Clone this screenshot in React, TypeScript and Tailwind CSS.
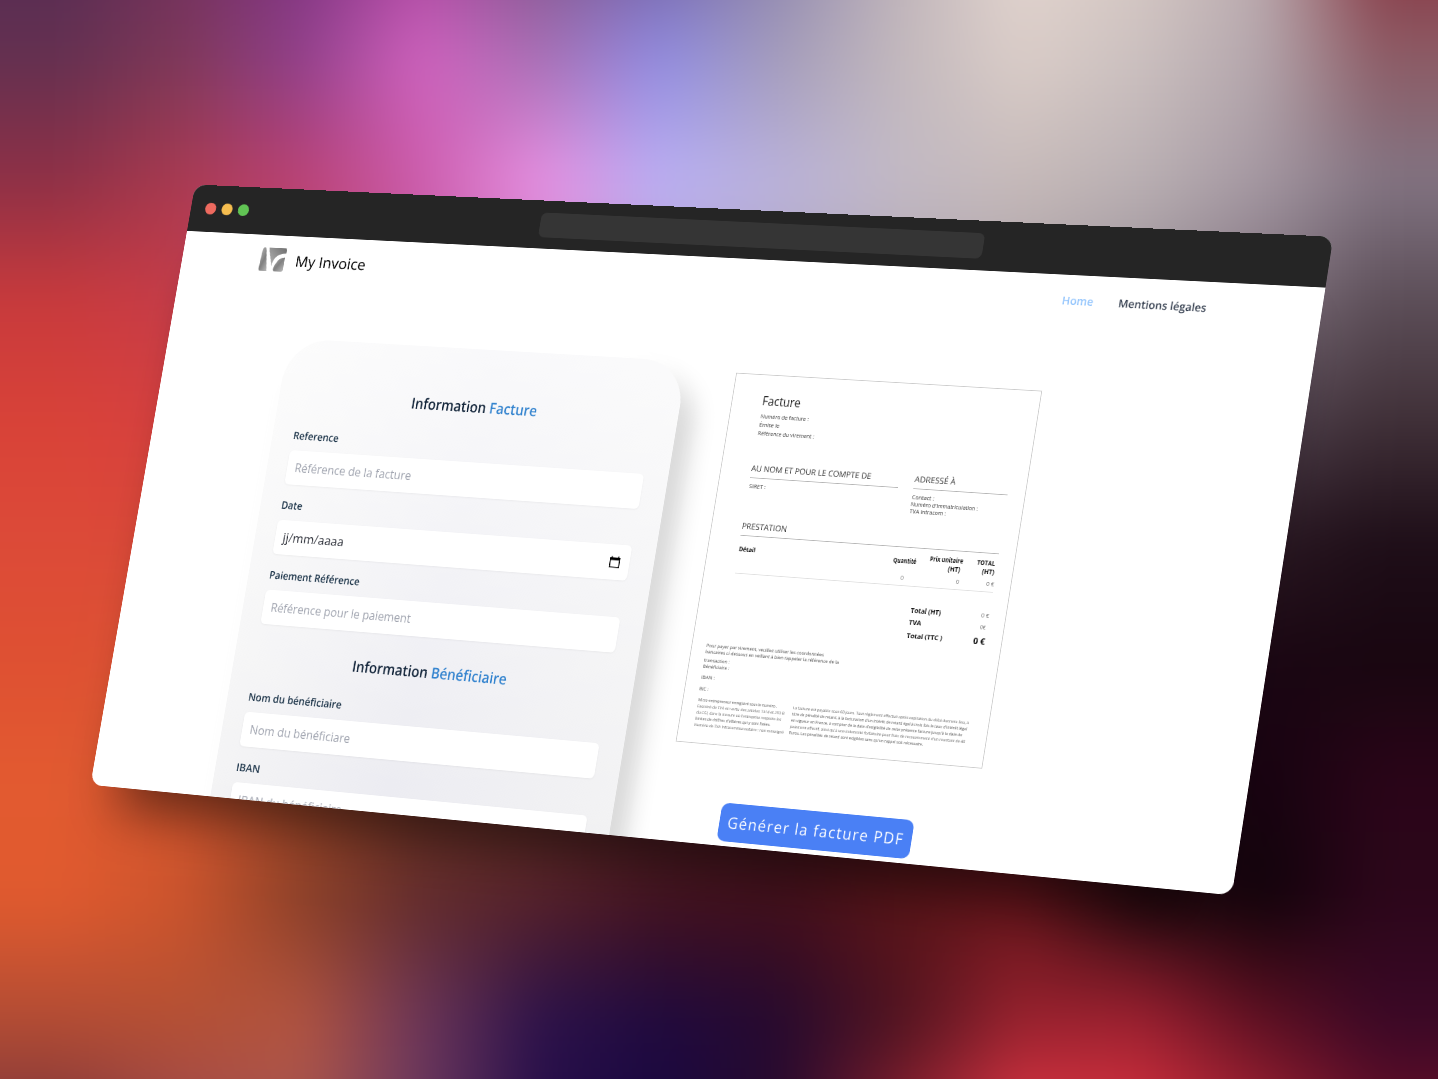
import { useLayoutEffect, useRef, useState, type ReactNode } from 'react';
import clsx from 'clsx';

const WIDTH = 1536;
const HEIGHT = 820;

/* Screen corners of the tilted window: top-left, top-right, bottom-right, bottom-left */
const CORNERS = [
  [195.1, 184.5],
  [1333.5, 236.8],
  [1232, 895.4],
  [90.4, 784.8],
];

function perspectiveMatrix(w: number, h: number, p: number[][]) {
  const [[x0, y0], [x1, y1], [x2, y2], [x3, y3]] = p;
  const dx1 = x1 - x2, dx2 = x3 - x2, sx = x0 - x1 + x2 - x3;
  const dy1 = y1 - y2, dy2 = y3 - y2, sy = y0 - y1 + y2 - y3;
  const det = dx1 * dy2 - dx2 * dy1;
  const g = (sx * dy2 - dx2 * sy) / det;
  const k = (dx1 * sy - sx * dy1) / det;
  const a = x1 - x0 + g * x1, b = x3 - x0 + k * x3;
  const d = y1 - y0 + g * y1, e = y3 - y0 + k * y3;
  return `matrix3d(${[a / w, d / w, 0, g / w, b / h, e / h, 0, k / h, 0, 0, 1, 0, x0, y0, 0, 1].join(',')})`;
}

/* Single line of text set to an exact width */
function T({ w, className, children }: { w: number; className?: string; children: ReactNode }) {
  const ref = useRef<HTMLSpanElement>(null);
  const [scale, setScale] = useState(1);
  useLayoutEffect(() => {
    if (ref.current && ref.current.offsetWidth) setScale(w / parseFloat(getComputedStyle(ref.current).width));
  }, [w]);
  return (
    <span className={clsx('block whitespace-nowrap', className)} style={{ width: w }}>
      <span ref={ref} className="inline-block origin-left align-top" style={{ transform: `scaleX(${scale})` }}>
        {children}
      </span>
    </span>
  );
}

/* Backdrop colours on a 120px lattice, blended between the lattice points */
const MESH = [
  ['#542c54', '#702f5c', '#7c3280', '#a8449c', '#7e5288', '#6e5ea0', '#8c84ac', '#beb2b8', '#e4d6d0', '#d8cac5', '#bcacb0', '#8a3440'],
  ['#643050', '#7e3858', '#90408a', '#d062be', '#a870b4', '#908ce2', '#a49cba', '#c2b8bc', '#dacdc8', '#cbc0bf', '#b4a6ac', '#8c5c66'],
  ['#8e3046', '#a83a50', '#ba4274', '#cc5cac', '#e890e2', '#bab0f4', '#bab2da', '#c2b9c4', '#c6bab9', '#bab0b3', '#a598a2', '#827482'],
  ['#c83a3c', '#c83c48', '#b8446a', '#c05aa4', '#c880c4', '#b0a0d4', '#aea6c0', '#b0a6b0', '#aaa0a6', '#9a9098', '#80727e', '#5c4e58'],
  ['#d84238', '#d84040', '#c04450', '#a04860', '#905870', '#806880', '#807080', '#807078', '#746872', '#645864', '#50424e', '#403038'],
  ['#dc4a38', '#dc4838', '#c44440', '#944040', '#703c4c', '#604050', '#584050', '#503c48', '#44303c', '#382430', '#2a1822', '#1e0e18'],
  ['#de5032', '#e05434', '#c04a34', '#883430', '#602c34', '#502430', '#48202c', '#401c28', '#341420', '#260c18', '#1a0612', '#180610'],
  ['#e25a30', '#d8562e', '#a04628', '#723424', '#643024', '#582424', '#4c1a20', '#441418', '#3c0e16', '#20060e', '#160310', '#2a0518'],
  ['#e05a2e', '#cc542c', '#8c4028', '#622c2c', '#54202a', '#42121f', '#420e1a', '#5a1418', '#68141a', '#24080e', '#10030a', '#2c061a'],
  ['#b24c34', '#b45034', '#b25440', '#6c3658', '#2c124a', '#200a3e', '#260a2e', '#501420', '#98222e', '#9c2030', '#5e1022', '#3a0826'],
  ['#7a343c', '#9c4850', '#a85652', '#6a3862', '#240c4a', '#160640', '#28092e', '#922232', '#ea3a48', '#e43642', '#b02636', '#6c1028'],
];

const STEPS = 8;

function rgb(hex: string) {
  return [1, 3, 5].map((i) => parseInt(hex.slice(i, i + 2), 16));
}

function Backdrop() {
  const strips: string[] = [];
  for (let r = 0; r < MESH.length - 1; r++) {
    for (let s = 0; s < STEPS; s++) {
      const t = s / STEPS;
      const stops = MESH[r].map((color, i) => {
        const from = rgb(color);
        const to = rgb(MESH[r + 1][i]);
        const mixed = from.map((v, n) => Math.round(v + (to[n] - v) * t));
        return `rgb(${mixed.join(',')}) ${120 + i * 120}px`;
      });
      strips.push(`linear-gradient(90deg, ${stops.join(',')})`);
    }
  }
  return (
    <div className="absolute -top-[68px] -left-[60px] flex w-[1560px] flex-col blur-[24px]">
      {strips.map((background, i) => (
        <div key={i} className="h-[15px] shrink-0" style={{ background }} />
      ))}
    </div>
  );
}

function Logo() {
  return (
    <svg viewBox="0 0 40 34" className="h-[34px] w-10">
      <defs>
        <linearGradient id="logoGray" x1="0" y1="0" x2="1" y2="1">
          <stop offset="0" stopColor="#b0b0b0" />
          <stop offset="0.5" stopColor="#808080" />
          <stop offset="1" stopColor="#bababa" />
        </linearGradient>
        <linearGradient id="logoTop" x1="0" y1="1" x2="1" y2="0">
          <stop offset="0" stopColor="#b8b8b8" />
          <stop offset="1" stopColor="#6e6e6e" />
        </linearGradient>
      </defs>
      <path d="M3 4 Q3.500 0 6 0 Q8 0 8.500 3 L13.500 32 H4 Q1.500 32 1.500 29 Z" fill="url(#logoGray)" />
      <path d="M13 -1 H34 Q38 -1 38 3 V7 Q27 8 23.500 13 Q20 17 19.500 25 L13 4 Q12 -1 13 -1 Z" fill="url(#logoTop)" />
      <path d="M37 12.500 V28.500 Q37 32 33.500 32 H25 Q22.500 32 22.500 29 Q22.500 24 26 20 Q28 13.500 37 12.500 Z" fill="url(#logoGray)" />
    </svg>
  );
}

function CalendarIcon() {
  return (
    <svg viewBox="0 0 16 16" className="size-4">
      <path d="M3.500 0.500v2M12.500 0.500v2" stroke="#000" strokeWidth="1.600" />
      <path d="M1.700 3h12.600v11.600h-12.600z" fill="none" stroke="#000" strokeWidth="1.400" />
      <path d="M1 2h14v3.500H1z" fill="#000" />
    </svg>
  );
}

function Field({ label, lw, text, tw, date }: { label: string; lw: number; text: string; tw: number; date?: boolean }) {
  return (
    <div className="mb-[18px]">
      <T w={lw} className="mb-2.5 ml-px text-sm font-semibold leading-5 text-[#1b3348]">{label}</T>
      <div className="flex h-[46px] items-center justify-between rounded-md bg-white pr-3 pl-[11px] shadow-[0_1px_3px_rgba(0,0,0,0.05)]">
        <T w={tw} className={clsx('text-base leading-6', date ? 'text-[#2c2f38]' : 'text-[#a1a5b0]')}>{text}</T>
        {date && <CalendarIcon />}
      </div>
    </div>
  );
}

function SectionTitle({ accent, w }: { accent: string; w: number }) {
  return (
    <div className="flex justify-center">
      <T w={w} className="text-xl font-[540] leading-7 text-[#14263b]">
        Information <span className="text-[#3182ce]">{accent}</span>
      </T>
    </div>
  );
}

function InvoiceForm() {
  return (
    <div className="mt-[70px] ml-[175px] h-[760px] w-[558px] shrink-0 rounded-[60px] bg-[linear-gradient(180deg,rgba(255,255,255,0.7)_0px,rgba(255,255,255,0)_640px),linear-gradient(95deg,#f5f5f5_0%,#ebebf1_48%,#f2f2f3_100%)] pr-[33px] pl-[29px] pt-[63px] shadow-[-20px_-20px_50px_#ffffff,18px_24px_34px_rgba(0,0,0,0.2)]">
      <SectionTitle accent="Facture" w={176} />
      <div className="mt-[29px]">
        <Field label="Reference" lw={65} text="Référence de la facture" tw={166} />
        <Field label="Date" lw={30} text="jj/mm/aaaa" tw={87} date />
        <Field label="Paiement Référence" lw={129} text="Référence pour le paiement" tw={199} />
      </div>
      <div className="mt-8">
        <SectionTitle accent="Bénéficiaire" w={216} />
      </div>
      <div className="mt-7">
        <Field label="Nom du bénéficiaire" lw={133} text="Nom du bénéficiare" tw={143} />
        <Field label="IBAN" lw={34} text="IBAN du bénéficiaire" tw={148} />
      </div>
    </div>
  );
}

function PaperHeading({ w, children }: { w: number; children: ReactNode }) {
  return (
    <div className="h-5 border-b border-[#b5b5b5]">
      <T w={w} className="text-[10.500px] leading-[14px] text-[#333]">{children}</T>
    </div>
  );
}

const LEFT_NOTES: [string, number][] = [
  ['Micro-entrepreneur enregistré sous le numéro .', 105],
  ['Exonéré de TVA en vertu des articles 1314 et 293 B', 116],
  ["du CGI, dans la mesure où l'entreprise respecte les", 113],
  ["limites de chiffres d'affaires qui y sont fixées.", 100],
  ['Numéro de TVA Intracommunautaire : non renseigné', 119],
];

const RIGHT_NOTES: [string, number][] = [
  ['La facture est payable sous 60 jours. Tout règlement effectué après expiration du délai donnera lieu, à', 229],
  ["titre de pénalité de retard, à la facturation d'un intérêt de retard égal à trois fois le taux d'intérêt légal", 228],
  ["en vigueur en France, à compter de la date d'exigibilité de cette présente facture jusqu'à la date de", 223],
  ["paiement effectif, ainsi qu'à une indemnité forfaitaire pour frais de recouvrement d'un montant de 40", 228],
  ["Euros. Les pénalités de retard sont exigibles sans qu'un rappel soit nécessaire.", 175],
];

function Paper() {
  return (
    <div className="h-[480px] w-[402px] border border-[#cccccc] bg-white pr-[21px] pl-[19px] text-[8px] leading-[9px] text-[#333]">
      <div className="pl-[21px]">
        <T w={51} className="pt-[23px] text-base leading-5 text-[#222]">Facture</T>
        <div className="mt-1 ml-px leading-[11px]">
          <T w={64}>Numéro de facture :</T>
          <T w={27}>Émise le</T>
          <T w={75}>Référence du virement :</T>
        </div>
        <div className="mt-[34px] grid h-[53px] grid-cols-[196px_122px] gap-5">
          <div>
            <PaperHeading w={159}>AU NOM ET POUR LE COMPTE DE</PaperHeading>
            <T w={22} className="mt-[5px] ml-px">SIRET :</T>
          </div>
          <div>
            <PaperHeading w={53}>ADRESSÉ À</PaperHeading>
            <T w={29} className="mt-[5px]">Contact :</T>
            <T w={87}>Numéro d'immatriculation :</T>
            <T w={47}>TVA Intracom :</T>
          </div>
        </div>
        <div className="mt-[22px]">
          <PaperHeading w={60}>PRESTATION</PaperHeading>
        </div>
        <div className="mt-[5px] ml-px flex h-[23px] items-center font-bold leading-[11px] text-[#111]">
          <T w={22}>Détail</T>
          <T w={30} className="ml-[182px]">Quantité</T>
          <div className="ml-[17px] flex w-[43px] flex-col items-end">
            <T w={43}>Prix unitaire</T>
            <T w={16} className="mr-0.5">(HT)</T>
          </div>
          <div className="ml-[18px] flex w-6 flex-col items-end">
            <T w={23} className="mr-px">TOTAL</T>
            <T w={16}>(HT)</T>
          </div>
        </div>
        <div className="ml-px flex h-[21px] items-center border-b border-[#e0e0e0] text-[7px] text-[#666]">
          <T w={4} className="ml-[217px]">0</T>
          <T w={4} className="ml-[68px]">0</T>
          <T w={10} className="ml-[35px]">0 €</T>
        </div>
        <div className="mt-[21px] ml-[238px] font-bold text-[#111]">
          <div className="flex h-4 items-center justify-between">
            <T w={39}>Total (HT)</T>
            <T w={10} className="text-[7px] font-normal text-[#666]">0 €</T>
          </div>
          <div className="flex h-[15px] items-center justify-between">
            <T w={16}>TVA</T>
            <T w={7} className="mr-0.5 text-[7px] font-normal text-[#666]">0€</T>
          </div>
          <div className="flex h-[18px] items-center justify-between">
            <T w={46}>Total (TTC )</T>
            <T w={15} className="text-[11px] font-bold">0 €</T>
          </div>
        </div>
      </div>
      <div className="mt-[22px] text-[6px] leading-[7.500px] text-[#444]">
        <T w={156}>Pour payer par virement, veuillez utiliser les coordonnées</T>
        <T w={177}>bancaires ci-dessous en veillant à bien rappeler la référence de la</T>
        <T w={34} className="mt-1 underline">transaction :</T>
        <T w={35} className="underline">Bénéficiaire :</T>
        <T w={18} className="mt-[7px] underline">IBAN :</T>
        <T w={12} className="mt-[7px] underline">BIC :</T>
      </div>
      <div className="mt-1.5 grid grid-cols-[126px_232px] pl-px text-[5px] leading-[8px] text-[#555]">
        <div>{LEFT_NOTES.map(([t, w]) => <T key={t} w={w}>{t}</T>)}</div>
        <div>{RIGHT_NOTES.map(([t, w]) => <T key={t} w={w}>{t}</T>)}</div>
      </div>
    </div>
  );
}

function TitleBar() {
  return (
    <div className="flex h-16 items-center bg-[#252525] pl-[21px]">
      <div className="flex w-[480px] gap-2">
        <span className="size-4 rounded-full bg-[#ee6a5f]" />
        <span className="size-4 rounded-full bg-[#f5bd4f]" />
        <span className="size-4 rounded-full bg-[#61c454]" />
      </div>
      <div className="h-[33px] w-[597px] rounded-lg bg-[#353535]" />
    </div>
  );
}

export default function App() {
  return (
    <div className="relative h-[1079px] w-[1438px] overflow-hidden bg-[#3a1018] font-['Open_Sans','Noto_Sans',sans-serif]">
      <Backdrop />
      <div
        className="absolute top-0 left-0 h-[820px] w-[1536px] origin-top-left rounded-2xl shadow-[0_70px_70px_-44px_rgba(0,0,0,0.55)]"
        style={{ transform: perspectiveMatrix(WIDTH, HEIGHT, CORNERS) }}
      >
        <div className="flex h-[820px] flex-col overflow-hidden rounded-2xl bg-white">
          <TitleBar />
          <nav className="flex h-[68px] items-center justify-between pr-[143px] pl-[112px]">
            <div className="flex items-center gap-[13px]">
              <Logo />
              <T w={101} className="text-xl font-[530] leading-7 text-black">My Invoice</T>
            </div>
            <div className="flex gap-8 pb-0.5 text-sm font-semibold leading-5">
              <T w={40} className="text-[#93c5fd]">Home</T>
              <T w={111} className="text-[#374151]">Mentions légales</T>
            </div>
          </nav>
          <main className="flex h-[688px] overflow-hidden">
            <InvoiceForm />
            <div className="mt-[81px] ml-[68px]">
              <Paper />
              <div className="mt-[72px] ml-[75px] flex h-[49px] w-[252px] items-center justify-center rounded-[10px] bg-[#4a80f5]">
                <T w={231} className="text-xl leading-7 tracking-[1.500px] text-white">Générer la facture PDF</T>
              </div>
            </div>
          </main>
        </div>
      </div>
    </div>
  );
}
